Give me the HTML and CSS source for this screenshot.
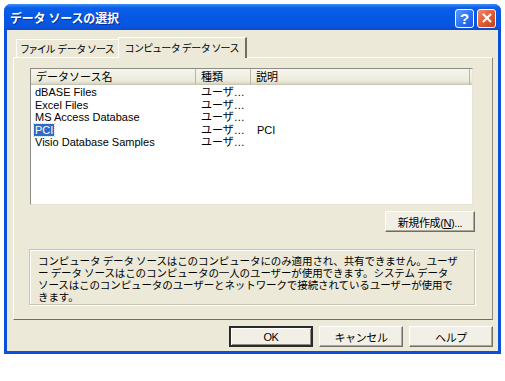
FILE: index.html
```html
<!DOCTYPE html>
<html lang="ja">
<head>
    <meta charset="UTF-8">
    <title>データ ソースの選択</title>
    <link rel="stylesheet" href="styles.css">
</head>
<body>
    <div class="window">
        <div class="titlebar">
            <span class="title">データ ソースの選択</span>
            <div class="caption-buttons">
                <div class="cap help">?</div>
                <div class="cap close">
                    <svg width="12" height="12" viewBox="0 0 12 12">
                        <line x1="2" y1="2" x2="10" y2="10" />
                        <line x1="10" y1="2" x2="2" y2="10" />
                    </svg>
                </div>
            </div>
        </div>
        <div class="client">
            <div class="tabs">
                <div class="tab file">ファイル データ ソース</div>
                <div class="tab active">コンピュータ データ ソース</div>
            </div>
            <div class="panel">
                <div class="listview">
                    <div class="lv-head">
                        <div class="col">データソース名</div>
                        <div class="col">種類</div>
                        <div class="col">説明</div>
                    </div>
                    <div class="lv-body">
                        <div class="lv-row"><span>dBASE Files</span><span>ユーザ…</span><span></span></div>
                        <div class="lv-row"><span>Excel Files</span><span>ユーザ…</span><span></span></div>
                        <div class="lv-row"><span>MS Access Database</span><span>ユーザ…</span><span></span></div>
                        <div class="lv-row"><span><em class="sel">PCI</em></span><span>ユーザ…</span><span>PCI</span></div>
                        <div class="lv-row"><span>Visio Database Samples</span><span>ユーザ…</span><span></span></div>
                    </div>
                </div>
                <div class="new-row">
                    <button class="btn new">新規作成(<u>N</u>)...</button>
                </div>
                <div class="groupbox">
                    <p class="desc">コンピュータ データ ソースはこのコンピュータにのみ適用され、共有できません。ユーザ<br>ー データ ソースはこのコンピュータの一人のユーザーが使用できます。システム データ<br>ソースはこのコンピュータのユーザーとネットワークで接続されているユーザーが使用で<br>きます。</p>
                </div>
            </div>
            <div class="footer">
                <button class="btn default">OK</button>
                <button class="btn">キャンセル</button>
                <button class="btn">ヘルプ</button>
            </div>
        </div>
    </div>
</body>
</html>
```

FILE: styles.css
```css
* {
    margin: 0;
    padding: 0;
    box-sizing: border-box;
}

body {
    background: #ffffff;
    font-family: "Liberation Sans", "Noto Sans CJK JP", sans-serif;
    font-size: 11px;
    color: #000000;
}

.window {
    margin: 4px 0 0 4px;
    width: 497px;
    height: 350px;
    background: #0a50dc;
    border-radius: 7px 7px 0 0;
    padding: 0 3px 3px 3px;
    display: flex;
    flex-direction: column;
}

.titlebar {
    height: 26px;
    margin: 0 -3px;
    padding: 0 5px 0 6px;
    border-radius: 7px 7px 0 0;
    background: linear-gradient(to bottom, #3d8cf6 0%, #0a5ee8 15%, #0558e4 55%, #0a55df 85%, #0a4ad0 100%);
    display: flex;
    align-items: center;
    justify-content: space-between;
}

.title {
    color: #ffffff;
    font-weight: bold;
    font-size: 12px;
    letter-spacing: -0.2px;
    text-shadow: 1px 1px 0 #0a2e9a;
}

.caption-buttons {
    display: flex;
    gap: 3px;
    padding-top: 2px;
}

.cap {
    width: 19px;
    height: 19px;
    border: 1px solid #ffffff;
    border-radius: 3px;
    display: flex;
    align-items: center;
    justify-content: center;
}

.help {
    background: linear-gradient(135deg, #5a9afc 0%, #2a6ef0 60%, #1c55d8 100%);
    color: #ffffff;
    font-weight: bold;
    font-size: 15px;
}

.close {
    background: linear-gradient(135deg, #f08a6a 0%, #e05a30 55%, #c8401c 100%);
}

.close line {
    stroke: #ffffff;
    stroke-width: 2.2;
}

.client {
    flex: 1;
    background: #ece9d8;
    padding: 7px 5px 0 6px;
    display: flex;
    flex-direction: column;
}

.tabs {
    display: flex;
    align-items: flex-end;
    height: 20px;
    padding-left: 3px;
}

.tab {
    height: 18px;
    padding-top: 2px;
    border: 1px solid #ffffff;
    border-right-color: #8c8a80;
    border-bottom: none;
    font-family: "Noto Sans CJK JP", sans-serif;
    font-size: 10px;
    line-height: 13px;
    font-feature-settings: "palt";
    text-align: center;
    white-space: nowrap;
}

.tab.file {
    width: 103px;
}

.tab + .tab {
    margin-left: -1px;
}

.tab.active {
    width: 129px;
    height: 21px;
    margin-bottom: -1px;
    padding-top: 3px;
    background: #ece9d8;
    position: relative;
    border-right: 2px solid #6e6d66;
}

.panel {
    height: 263px;
    border: 1px solid #ffffff;
    border-right-color: #8c8a80;
    border-bottom: 1px solid #6e6d66;
    padding: 10px 19px 0 16px;
}

.listview {
    height: 137px;
    background: #ffffff;
    border: 1px solid #8e8d85;
    border-right-color: #e6e4d8;
    border-bottom-color: #e6e4d8;
}

.lv-head {
    display: grid;
    grid-template-columns: 165px 55px 1fr;
    height: 16px;
    background: linear-gradient(to bottom, #f6f5ee 0%, #ebeadb 80%, #d6d3c0 100%);
    border-bottom: 1px solid #c8c5b2;
    font-family: "Noto Sans CJK JP", sans-serif;
    font-size: 11px;
    line-height: 15px;
}

.lv-head .col {
    padding-left: 5px;
    border-right: 1px solid #b9b6a4;
}

.lv-head .col:last-child {
    margin-right: 2px;
}

.lv-body {
    padding-top: 1px;
}

.lv-row {
    display: grid;
    grid-template-columns: 165px 55px 1fr;
    height: 12.5px;
    line-height: 12.5px;
}

.lv-row span {
    padding-left: 4px;
    white-space: nowrap;
}

.lv-row span:nth-child(2) {
    padding-left: 5px;
}

.lv-row span:nth-child(3) {
    padding-left: 6px;
}

.sel {
    font-style: normal;
    background: #316ac5;
    color: #ffffff;
    outline: 1px dotted #c8d8f0;
    padding: 0 1px;
    margin-left: -1px;
}

.new-row {
    display: flex;
    justify-content: flex-end;
    margin-top: 6px;
    margin-right: -2px;
}

.btn {
    height: 21px;
    width: 84px;
    font-family: "Liberation Sans", "Noto Sans CJK JP", sans-serif;
    font-size: 11px;
    letter-spacing: -0.4px;
    color: #000000;
    background: #f2f0e6;
    border: 1px solid #ffffff;
    border-right-color: #716f64;
    border-bottom-color: #716f64;
    box-shadow: inset -1px -1px 0 #aca899;
}

.btn.new {
    width: 90px;
}

.btn.default {
    border: 2px solid #2a2a28;
    box-shadow: inset 1px 1px 0 #ffffff, inset -1px -1px 0 #8e8c82;
}

.groupbox {
    margin-top: 17px;
    height: 56px;
    margin-left: -1px;
    margin-right: -2px;
    border: 1px solid #c8c5b4;
    box-shadow: 1px 1px 0 #ffffff, inset 1px 1px 0 #ffffff;
    padding: 5px 8px 0 8px;
}

.desc {
    font-family: "Noto Sans CJK JP", sans-serif;
    font-size: 10.5px;
    letter-spacing: -0.1px;
    line-height: 12px;
    white-space: nowrap;
}

.footer {
    display: flex;
    justify-content: flex-end;
    gap: 6px;
    margin-top: 6px;
}
```
